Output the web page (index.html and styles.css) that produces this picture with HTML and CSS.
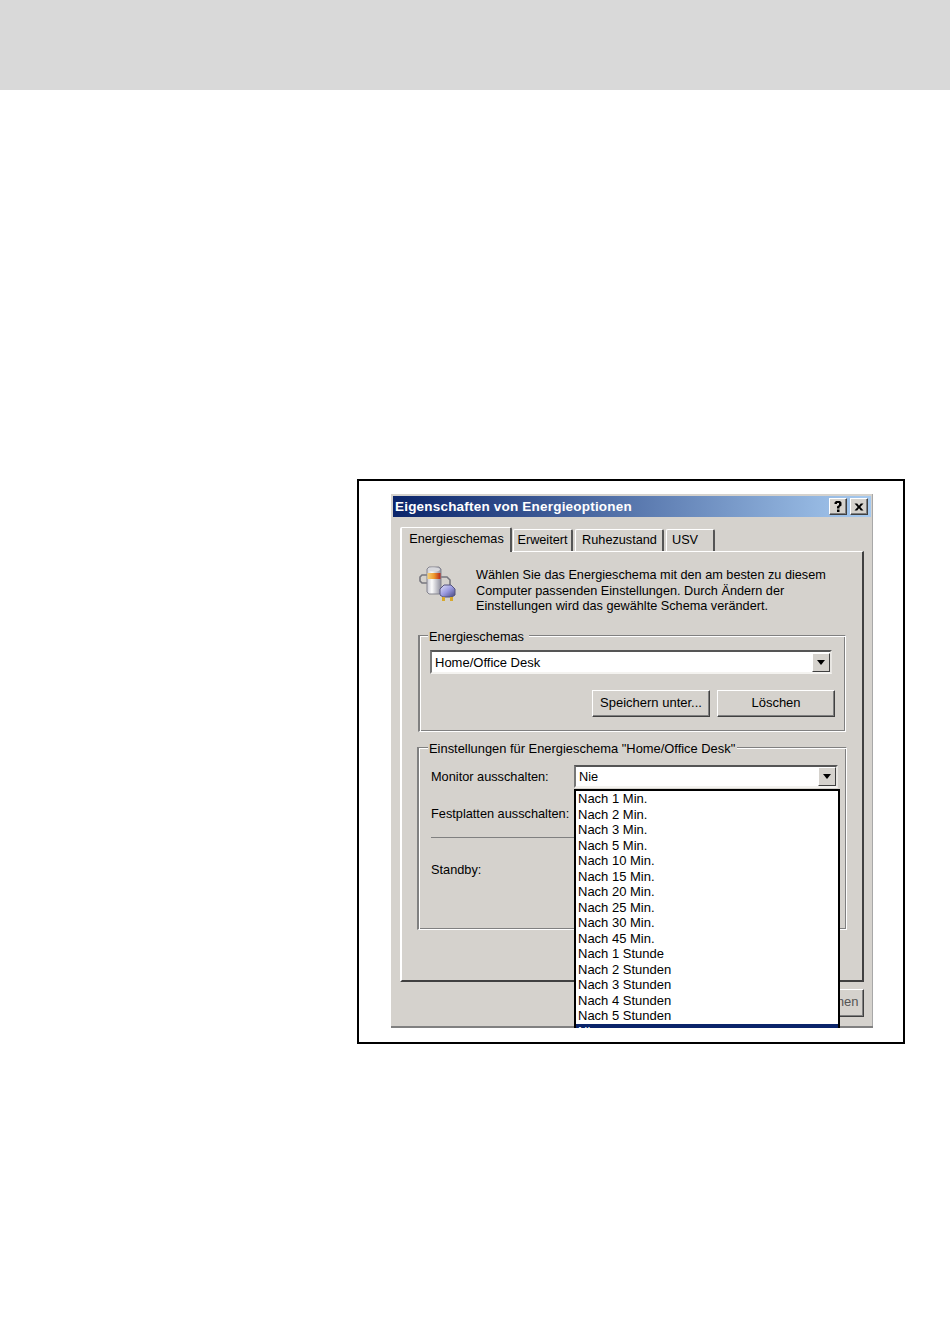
FILE: index.html
```html
<!DOCTYPE html>
<html lang="de">
<head>
<meta charset="utf-8">
<title>Eigenschaften von Energieoptionen</title>
<link rel="stylesheet" href="styles.css">
</head>
<body>
<header class="band"></header>
<main class="page">
  <figure class="frame">
    <div class="dialog">
      <div class="titlebar">
        <span class="title">Eigenschaften von Energieoptionen</span>
        <span class="capbtns">
          <span class="capbtn">
            <svg width="12" height="13" viewBox="0 0 12 13"><path d="M2.500 4V2.500L4 1H8L9.500 2.500V5.500L7.500 7V8.500H5V6.500L7 5V3H5V4ZM5 9.500H7.500V12H5Z" fill="#000"/></svg>
          </span>
          <span class="capbtn">
            <svg width="12" height="12" viewBox="0 0 12 12"><path d="M1.500 2.500H4.200L6 4.700L7.800 2.500H10.500L7.300 6L10.500 9.500H7.800L6 7.300L4.200 9.500H1.500L4.700 6Z" fill="#000"/></svg>
          </span>
        </span>
      </div>
      <div class="tabs">
        <span class="tab tab-active">Energieschemas</span>
        <span class="tab tab-2">Erweitert</span>
        <span class="tab tab-3">Ruhezustand</span>
        <span class="tab tab-4">USV</span>
      </div>
      <section class="panel">
        <div class="intro">
          <svg class="power-icon" width="40" height="36" viewBox="0 0 40 36">
            <defs>
              <linearGradient id="can" x1="0" x2="1" y1="0" y2="0">
                <stop offset="0" stop-color="#c9c9d2"/>
                <stop offset=".35" stop-color="#fbfbfb"/>
                <stop offset="1" stop-color="#8e8e9c"/>
              </linearGradient>
              <linearGradient id="band" x1="0" x2="1" y1="0" y2="0">
                <stop offset="0" stop-color="#f6d27a"/>
                <stop offset=".5" stop-color="#ee9a2e"/>
                <stop offset="1" stop-color="#b8281a"/>
              </linearGradient>
              <linearGradient id="plug" x1="0" x2="1" y1="0" y2="1">
                <stop offset="0" stop-color="#e4e4f8"/>
                <stop offset=".5" stop-color="#9a9ae0"/>
                <stop offset="1" stop-color="#46467c"/>
              </linearGradient>
            </defs>
            <path d="M8 9H3L1 11V15L3 17H8" fill="none" stroke="#77777f" stroke-width="1.6"/>
            <path d="M22 11H28L31 14V20" fill="none" stroke="#77777f" stroke-width="1.6"/>
            <path d="M8 3L10 1H20L22 3V26L20 28H10L8 26Z" fill="url(#can)" stroke="#85858f"/>
            <ellipse cx="15" cy="3.500" rx="6" ry="2" fill="#d8d8dc"/>
            <rect x="8.500" y="7" width="13" height="6" fill="url(#band)"/>
            <path d="M21 23L25 19H32L36 23V29L33 31H24L21 29Z" fill="url(#plug)" stroke="#55557f"/>
            <path d="M23 31H26V35H23ZM31 31H34V35H31Z" fill="#d8a92c"/>
          </svg>
          <p class="intro-text">Wählen Sie das Energieschema mit den am besten zu diesem<br>Computer passenden Einstellungen. Durch Ändern der<br>Einstellungen wird das gewählte Schema verändert.</p>
        </div>

        <div class="group group-schemes">
          <span class="legend">Energieschemas</span>
          <div class="combo combo-wide">
            <span class="combo-value">Home/Office Desk</span>
            <span class="combo-arrow"><i class="tri"></i></span>
          </div>
          <div class="button-row">
            <span class="btn">Speichern unter...</span>
            <span class="btn">Löschen</span>
          </div>
        </div>

        <div class="group group-settings">
          <span class="legend">Einstellungen für Energieschema "Home/Office Desk"</span>
          <div class="setting setting-monitor">
            <span class="setting-label">Monitor ausschalten:</span>
            <div class="combo combo-short">
              <span class="combo-value">Nie</span>
              <span class="combo-arrow"><i class="tri"></i></span>
            </div>
          </div>
          <div class="setting setting-disk">
            <span class="setting-label">Festplatten ausschalten:</span>
          </div>
          <div class="rule"></div>
          <div class="setting setting-standby">
            <span class="setting-label">Standby:</span>
          </div>
        </div>
      </section>
      <div class="footer">
        <span class="btn btn-apply">Übernehmen</span>
      </div>

      <ul class="dropdown">
        <li>Nach 1 Min.</li>
        <li>Nach 2 Min.</li>
        <li>Nach 3 Min.</li>
        <li>Nach 5 Min.</li>
        <li>Nach 10 Min.</li>
        <li>Nach 15 Min.</li>
        <li>Nach 20 Min.</li>
        <li>Nach 25 Min.</li>
        <li>Nach 30 Min.</li>
        <li>Nach 45 Min.</li>
        <li>Nach 1 Stunde</li>
        <li>Nach 2 Stunden</li>
        <li>Nach 3 Stunden</li>
        <li>Nach 4 Stunden</li>
        <li>Nach 5 Stunden</li>
        <li class="selected">Nie</li>
      </ul>
    </div>
  </figure>
</main>
</body>
</html>
```
FILE: styles.css
```css
* { box-sizing: border-box; }
html, body { margin: 0; padding: 0; background: #fff; }
body {
  width: 950px;
  height: 1344px;
  overflow: hidden;
  font-family: "Liberation Sans", Arial, sans-serif;
  font-size: 13px;
  line-height: 15.5px;
  color: #000;
}
.band { height: 90px; background: #d9d9d9; }
.page { padding: 389px 0 0 357px; }
.frame {
  margin: 0;
  width: 548px;
  height: 565px;
  border: 2px solid #000;
  padding: 13px 0 0 32px;
}
.dialog {
  position: relative;
  width: 482px;
  height: 534px;
  overflow: hidden;
  padding: 2px 2px 0 2px;
  background: #d5d2cd;
  box-shadow: inset 0 -2px 0 #808080, inset -1px 0 0 #a8a8a8;
}
.titlebar {
  height: 21px;
  display: flex;
  align-items: center;
  justify-content: space-between;
  padding: 0 3px 0 2px;
  background: linear-gradient(90deg, #0a246a, #a6caf0);
}
.title { color: #fff; font-weight: 700; font-size: 13.5px; letter-spacing: .2px; }
.capbtns { display: flex; gap: 3px; }
.capbtn {
  width: 18px;
  height: 17px;
  display: flex;
  align-items: center;
  justify-content: center;
  background: #d5d2cd;
  border: 1px solid;
  border-color: #fff #404040 #404040 #fff;
  box-shadow: inset -1px -1px 0 #808080;
}
.tabs {
  display: flex;
  align-items: flex-end;
  height: 24px;
  margin-top: 10px;
  padding-left: 7px;
  font-size: 12.7px;
}
.tab {
  display: flex;
  justify-content: center;
  height: 22px;
  padding-top: 3px;
  margin-left: 2px;
  background: #d5d2cd;
  border-top: 1px solid #fff;
  border-left: 1px solid #fff;
  border-right: 2px solid #555;
  border-top-left-radius: 2px;
  border-top-right-radius: 2px;
}
.tab-active {
  width: 112px;
  height: 25px;
  margin: 0 0 -1px;
  position: relative;
  z-index: 1;
  padding-top: 4px;
  padding-left: 1px;
  border-left-width: 2px;
}
.tab-2 { width: 60px; margin-left: 1px; }
.tab-3 { width: 89px; padding-left: 1px; }
.tab-4 { width: 49px; justify-content: flex-start; padding-left: 5px; }
.panel {
  width: 464px;
  height: 431px;
  margin-left: 7px;
  padding: 14px 0 0 16px;
  background: #d5d2cd;
  border-top: 1px solid #fff;
  border-left: 2px solid #fff;
  border-right: 2px solid #404040;
  border-bottom: 2px solid #404040;
}
.intro { display: flex; height: 69px; gap: 17px; }
.power-icon { flex: none; margin-left: 1px; }
.intro-text { margin: 2px 0 0; white-space: nowrap; font-size: 12.7px; }
.group {
  position: relative;
  border: 1px solid;
  border-color: #808080 #fff #fff #808080;
  border-left-width: 2px;
  background: #d5d2cd;
  box-shadow: inset 1px 1px 0 #fff, inset -1px -1px 0 #808080;
}
.group-schemes { width: 428px; height: 97px; padding: 14px 10px 0 10px; }
.group-settings { width: 430px; height: 183px; margin: 15px 0 0 -1px; padding: 17px 8px 0 12px; }
.legend {
  position: absolute;
  top: -7px;
  padding: 0 1px;
  background: #d5d2cd;
  white-space: nowrap;
}
.group-schemes .legend { left: 8px; padding-right: 5px; font-size: 12.75px; }
.group-settings .legend { left: 9px; padding-right: 2px; font-size: 12.9px; }
.combo {
  display: flex;
  align-items: center;
  justify-content: space-between;
  height: 24px;
  background: #fff;
  border: 2px solid;
  border-color: #555 #e8e6e2 #f4f3f0 #777;
}
.combo-wide { width: 402px; }
.combo-wide .combo-value { padding-top: 2px; }
.combo-short { width: 264px; height: 23px; }
.combo-value { padding-left: 3px; }
.combo-arrow {
  display: flex;
  align-items: center;
  justify-content: center;
  width: 18px;
  height: 19px;
  background: #d5d2cd;
  border: 1px solid;
  border-color: #fff #404040 #404040 #fff;
}
.tri {
  width: 0;
  height: 0;
  border-left: 4px solid transparent;
  border-right: 4px solid transparent;
  border-top: 5px solid #000;
}
.button-row { display: flex; justify-content: flex-end; gap: 7px; margin-top: 16px; }
.btn {
  display: flex;
  align-items: center;
  justify-content: center;
  width: 118px;
  height: 27px;
  padding-bottom: 2px;
  background: #d5d2cd;
  border: 1px solid;
  border-color: #fff #404040 #404040 #fff;
  box-shadow: inset -1px -1px 0 #808080;
  white-space: nowrap;
}
.setting { display: flex; align-items: center; justify-content: space-between; font-size: 12.75px; }
.setting-monitor { height: 23px; }
.setting-disk { height: 23px; margin-top: 14px; }
.rule { width: 144px; height: 1px; margin-top: 12px; background: #808080; }
.setting-standby { height: 23px; margin-top: 20px; }
.footer { display: flex; justify-content: flex-end; margin: 7px 7px 0 0; }
.btn-apply { width: 86px; height: 28px; color: #555; }
.dropdown {
  position: absolute;
  top: 295px;
  left: 183px;
  width: 266px;
  height: 239px;
  margin: 0;
  padding: 0;
  overflow: hidden;
  list-style: none;
  font-size: 13px;
  background: #fff;
  border: 2px solid #000;
  border-bottom: 0;
}
.dropdown li { height: 15.5px; padding-left: 2px; white-space: nowrap; }
.dropdown .selected { background: #0a246a; color: #fff; }
```
